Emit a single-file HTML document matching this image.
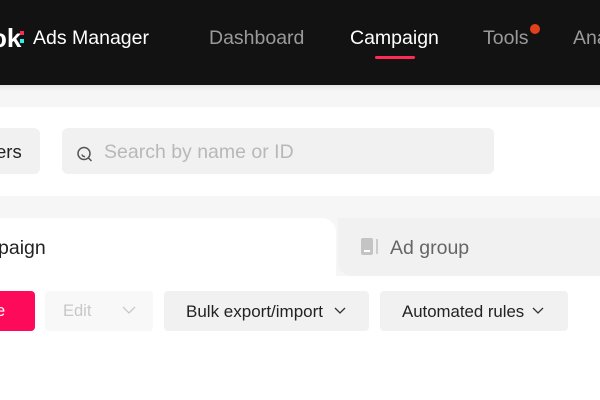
<!DOCTYPE html>
<html><head><meta charset="utf-8"><style>
*{margin:0;padding:0;box-sizing:border-box}
body{width:600px;height:400px;overflow:hidden;background:#fff;font-family:"Liberation Sans",Arial,sans-serif;position:relative}
.a{position:absolute;white-space:nowrap}
</style></head><body>
<div class="a" style="left:0;top:0;width:600px;height:85px;background:#121212"></div>
<div class="a" style="left:0;top:85px;width:600px;height:22px;background:linear-gradient(#e6e6e6,#f6f6f6 6px,#f6f6f6)"></div>
<div class="a" style="left:-9px;top:23px;font-size:26px;font-weight:bold;color:#fff">ok</div>
<div class="a" style="left:20px;top:31px;width:4px;height:4px;background:#fe2c55"></div>
<div class="a" style="left:20px;top:39px;width:4px;height:4px;background:#25f4ee"></div>
<div class="a" style="left:33px;top:27px;font-size:19.5px;color:#fff">Ads Manager</div>
<div class="a" style="left:209px;top:27px;font-size:19.5px;color:#9a9a9a">Dashboard</div>
<div class="a" style="left:350px;top:27px;font-size:19.5px;color:#fff">Campaign</div>
<div class="a" style="left:375px;top:56px;width:40px;height:3px;background:#fe2c55;border-radius:2px"></div>
<div class="a" style="left:483px;top:27px;font-size:19.5px;color:#9a9a9a">Tools</div>
<div class="a" style="left:530px;top:24px;width:10px;height:10px;background:#e0401c;border-radius:50%"></div>
<div class="a" style="left:573px;top:27px;font-size:19.5px;color:#9a9a9a">Ana</div>

<div class="a" style="left:-20px;top:128px;width:60px;height:46px;background:#f1f1f1;border-radius:6px"></div>
<div class="a" style="left:-4px;top:141px;font-size:18.5px;color:#222">ers</div>
<div class="a" style="left:62px;top:128px;width:432px;height:46px;background:#f1f1f1;border-radius:6px"></div>
<svg class="a" style="left:76px;top:145px" width="18" height="18" viewBox="0 0 18 18"><circle cx="8" cy="8.5" r="6" fill="none" stroke="#555" stroke-width="1.5"/><path d="M12.5 13l3 3M6 9.5a2.5 2.5 0 0 0 3 2" fill="none" stroke="#555" stroke-width="1.5"/></svg>
<div class="a" style="left:104px;top:141px;font-size:19.5px;color:#b8b8b8">Search by name or ID</div>

<div class="a" style="left:0;top:196px;width:600px;height:80px;background:#f6f6f6"></div>
<div class="a" style="left:-20px;top:218px;width:356px;height:70px;background:#fff;border-radius:0 14px 0 0"></div>
<div class="a" style="left:338px;top:218px;width:262px;height:58px;background:#f1f1f1;border-radius:0 0 0 14px"></div>
<div class="a" style="left:-2px;top:237px;font-size:19.5px;color:#222">paign</div>
<div class="a" style="left:361px;top:238px;width:12px;height:17px;background:#c4c4c4;border-radius:2px"></div>
<div class="a" style="left:364px;top:250px;width:6px;height:2px;background:#fff"></div>
<div class="a" style="left:376px;top:239px;width:2px;height:15px;background:#ccc"></div>
<div class="a" style="left:390px;top:237px;font-size:19.5px;color:#666">Ad group</div>

<div class="a" style="left:-10px;top:291px;width:45px;height:40px;background:#fe0a5a;border-radius:4px"></div>
<div class="a" style="left:-4px;top:302px;font-size:16.5px;color:#fff">e</div>
<div class="a" style="left:45px;top:291px;width:108px;height:40px;background:#f8f8f8;border-radius:4px"></div>
<div class="a" style="left:63px;top:302px;font-size:16.5px;color:#c8c8c8">Edit</div>
<svg class="a" style="left:122px;top:305px" width="14" height="10"><path d="M1 2l6 6 6-6" fill="none" stroke="#c8c8c8" stroke-width="1.3"/></svg>
<div class="a" style="left:164px;top:291px;width:205px;height:40px;background:#f1f1f1;border-radius:4px"></div>
<div class="a" style="left:186px;top:302px;font-size:17px;color:#222">Bulk export/import</div>
<svg class="a" style="left:333px;top:306px" width="14" height="10"><path d="M2 2l5 5 5-5" fill="none" stroke="#333" stroke-width="1.3"/></svg>
<div class="a" style="left:380px;top:291px;width:188px;height:40px;background:#f1f1f1;border-radius:4px"></div>
<div class="a" style="left:402px;top:302px;font-size:16.8px;color:#222">Automated rules</div>
<svg class="a" style="left:531px;top:306px" width="14" height="10"><path d="M2 2l5 5 5-5" fill="none" stroke="#333" stroke-width="1.3"/></svg>
</body></html>
